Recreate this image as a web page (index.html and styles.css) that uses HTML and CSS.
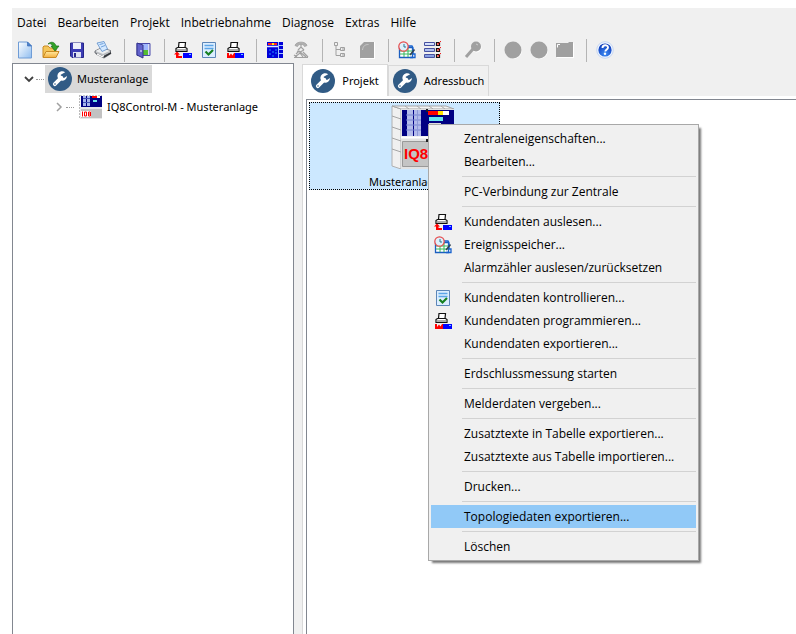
FILE: index.html
```
<!DOCTYPE html>
<html lang="de">
<head>
<meta charset="utf-8">
<title>Musteranlage</title>
<link rel="stylesheet" href="styles.css">
</head>
<body>
<svg class="defs" aria-hidden="true">
  <defs>
    <linearGradient id="paper" x1="0" y1="0" x2="1" y2="1"><stop offset="0" stop-color="#fff"/><stop offset="1" stop-color="#8fbdf0"/></linearGradient>
    <linearGradient id="gold" x1="0" y1="0" x2="0" y2="1"><stop offset="0" stop-color="#ffe9a0"/><stop offset="1" stop-color="#f5b040"/></linearGradient>
    <linearGradient id="bar" x1="0" y1="0" x2="0" y2="1"><stop offset="0" stop-color="#dfe8ff"/><stop offset="1" stop-color="#7d97e0"/></linearGradient>
    <radialGradient id="ball" cx=".5" cy=".8" r=".8"><stop offset="0" stop-color="#3f8df5"/><stop offset="1" stop-color="#0b35b5"/></radialGradient>
    <symbol id="i-new" viewBox="0 0 18 18"><path d="M2.500 1h9l4 4v12h-13z" fill="url(#paper)" stroke="#6f9cd6"/><path d="M11.500 1v4h4z" fill="#4d82cc" stroke="#3b6fb8" stroke-width=".7"/></symbol>
    <symbol id="i-open" viewBox="0 0 18 18"><path d="M1 16V6l1-1h4l2 2h6v3" fill="#f4c65a" stroke="#c98a24"/><path d="M1 16.500l3-6h13l-3 6z" fill="url(#gold)" stroke="#c98a24"/><path d="M6 3c3-3 7-2 8 2h3l-4 5-4-5h2c-1-2-3-3-5-2z" fill="#32a428" stroke="#176b16" stroke-width=".7"/></symbol>
    <symbol id="i-save" viewBox="0 0 18 18"><path d="M2.500 2h13v14.500H4L2.500 15z" fill="#3c3cb4" stroke="#26268a"/><path d="M5 2h8v6H5z" fill="#eef0fb"/><path d="M5 11h8v5.500H5z" fill="#dfe2f2"/><path d="M6 12h2v4H6z" fill="#26268a"/></symbol>
    <symbol id="i-print" viewBox="0 0 18 18"><path d="M2 12l5-4 10 3v2l-7 4.500-8-4z" fill="#777b80"/><path d="M1 10l6-3 9.500 2.500v2.500L9 15.500 1 12z" fill="#b9bcc0" stroke="#55595f" stroke-width=".8"/><path d="M1.500 10L7 7.300l9 2.400-7 3.300z" fill="#eceef0"/><path d="M3 2l7-1.500 3.500 7.500L8 10.500z" fill="#d3e8ff" stroke="#5d8ec9" stroke-width=".8"/><path d="M5.500 3.500l4-1M7 6l4-1.500" stroke="#6fa1dc"/><path d="M3 13l5 2.500 2-.8" fill="none" stroke="#fff" stroke-width="1.300"/><path d="M10 15.800l7-4" stroke="#303338" stroke-width="1.500"/></symbol>
    <symbol id="i-exit" viewBox="0 0 18 18"><path d="M3 2.500h13v12H3z" fill="#d7dcf4" stroke="#4949aa"/><path d="M9 3h5v7H9z" fill="#9fb6ff"/><path d="M9 9h5v5H9z" fill="#55bd32"/><path d="M3 2l6 2v13l-6-3z" fill="#6262cc" stroke="#34348b"/><path d="M7 9v2" stroke="#fff"/></symbol>
    <symbol id="i-read" viewBox="0 0 18 18"><path d="M5 1.500h6.500l-.5 5H4.500z" fill="#fff" stroke="#111" stroke-width="1.200"/><path d="M2 7.500l1.500-1h8l1.500 1v3H2z" fill="#fff" stroke="#111" stroke-width="1.200"/><path d="M3 9h9" stroke="#111" stroke-width=".7"/><path d="M0 13.500L3 10.500l3 3H4.500V15H8v2H2v-3.500z" fill="#f00"/><path d="M9 12h9v5H9z" fill="#00f"/><path d="M15 13.500h2" stroke="#6cf"/></symbol>
    <symbol id="i-prog" viewBox="0 0 18 18"><path d="M5 1.500h6.500l-.5 5H4.500z" fill="#fff" stroke="#111" stroke-width="1.200"/><path d="M2 7.500l1.500-1h8l1.500 1v3H2z" fill="#fff" stroke="#111" stroke-width="1.200"/><path d="M3 9h9" stroke="#111" stroke-width=".7"/><path d="M1 12h2v3l2-2.500 1.500 2L8 12h1v5H1z" fill="#f00"/><path d="M9 12h9v5H9z" fill="#00f"/><path d="M15 13.500h2" stroke="#6cf"/></symbol>
    <symbol id="i-check" viewBox="0 0 18 18"><path d="M2.500 1.500h13v15h-13z" fill="#dceeff" stroke="#5c86b8"/><path d="M4.500 4.500h9M4.500 7.500h9" stroke="#5ba5e8" stroke-width="1.300"/><path d="M5.500 10.500l3 3 4.500-4.500" fill="none" stroke="#168020" stroke-width="2.200"/></symbol>
    <symbol id="i-panel" viewBox="0 0 18 18"><path d="M1 1h16v16H1z" fill="#0000d8"/><path d="M2 2h4v2H2zM8 2h3v2H8z" fill="#f22"/><path d="M6 2h2v2H6z" fill="#fe0"/><path d="M1 5.500h12" stroke="#dfe8ff" stroke-width="1.500"/><path d="M12.500 1v16M13 4.500h4M13 8.500h4M13 12.500h4" stroke="#a5c4ff"/><path d="M3 9h2m1 2h2m1-2h2M3 13h2m1 2h2m1-3h2" stroke="#2090ff"/></symbol>
    <symbol id="i-phone" viewBox="0 0 18 18" fill="none" stroke="#a0a0a0"><path d="M3 4.500c1-4.500 11-4.500 12 0l-2.500 1c-1-3-6-3-7 0z" fill="#b0b0b0" stroke-width=".8"/><path d="M9 3v4M6 9l3-3 3 3M5 10l3 1 4-2M4 13l3-3 7 6M3 16l5-4 3 4M2 14l3 2m6-5l5 5M2 16.500h14" stroke-width="1.200"/></symbol>
    <symbol id="i-tree" viewBox="0 0 18 18" fill="none" stroke="#a0a0a0"><path d="M2.500 1.500h3v3h-3zM4 5v9.500h4M4 8.500h4M8.500 6.500h4v3h-4zM8.500 12.500h4v3h-4zM10 8h3M10 14h3"/></symbol>
    <symbol id="i-doc" viewBox="0 0 18 18"><path d="M3 5l4-4h10v17H3z" fill="#fff"/><path d="M2 5l4-4h10v16H2z" fill="#a0a0a0"/><path d="M4.500 9c.5-4 2.500-5.500 6-5.500" fill="none" stroke="#c8c8c8"/></symbol>
    <symbol id="i-event" viewBox="0 0 18 18"><path d="M1.500 6.500h13v10h-13z" fill="#fff" stroke="#1b5fc0" stroke-width="1.300"/><path d="M2 10h12M2 13h12M6 7v9M10 7v9" stroke="#35b85e"/><path d="M9 5h5l1 2v6h2v3.500h-5" fill="none" stroke="#1762ce" stroke-width="1.300"/><circle cx="5.500" cy="5.500" r="4.700" fill="#def0fb" stroke="#e84a4a" stroke-width="1.200"/><path d="M6 3v3h2" fill="none" stroke="#2b7593"/><path d="M12 14l4.500-5.500" stroke="#345" stroke-width="1.600"/></symbol>
    <symbol id="i-list" viewBox="0 0 18 18"><path d="M.5 1.500h10v3H.5zM.5 7.500h10v3H.5zM.5 13.500h10v3H.5z" fill="url(#bar)" stroke="#4751a0"/><path d="M12.500 1.500h3v3h-3zM12.500 7.500h3v3h-3zM12.500 13.500h3v3h-3z" fill="#f77" stroke="#111" stroke-width="1.200"/><path d="M14 3l3-3m-3 9l3-3m-3 9l3-3" stroke="#e22"/></symbol>
    <symbol id="i-key" viewBox="0 0 18 18"><circle cx="12.500" cy="6.500" r="5" fill="#fff"/><circle cx="12" cy="5.500" r="5" fill="#a0a0a0"/><path d="M9 8L2 16" stroke="#a0a0a0" stroke-width="3"/><path d="M12 3l2 1" stroke="#ccc"/></symbol>
    <symbol id="i-dot" viewBox="0 0 18 18"><circle cx="9.500" cy="9.500" r="8.500" fill="#fff"/><circle cx="9" cy="9" r="8.500" fill="#a0a0a0"/></symbol>
    <symbol id="i-folder" viewBox="0 0 18 18"><path d="M1 3h11l1-2h4l1 2v14H1z" fill="#fff"/><path d="M0 2h12l1-1h4v15H0z" fill="#a0a0a0"/><path d="M1.500 6.500v-3H4" fill="none" stroke="#fff"/></symbol>
    <symbol id="i-help" viewBox="0 0 18 18"><circle cx="9" cy="9" r="8.300" fill="#edf4ff" stroke="#bccff0" stroke-width=".8"/><circle cx="9" cy="9" r="6.600" fill="url(#ball)"/><path d="M6.500 7c0-3.500 5.500-3.500 5.500-.5 0 2-2.500 1.800-2.700 4" fill="none" stroke="#fff" stroke-width="1.900"/><circle cx="9" cy="12.800" r="1.200" fill="#fff"/></symbol>
    <symbol id="i-wrench" viewBox="0 0 24 24"><circle cx="12" cy="12" r="12" fill="#315b85"/><path d="M6.800 17.200l6.500-6.500" stroke="#fff" stroke-width="3.800" stroke-linecap="round"/><path d="M17.200 5.200A4.800 4.800 0 1 0 19 9l-3 2-2.700-.7-.6-2.600z" fill="#fff"/><circle cx="7" cy="17" r=".8" fill="#315b85"/></symbol>
    <symbol id="i-rack" viewBox="0 0 64 64">
      <path d="M1 1l9 3v60l-9-3z" fill="#f0f0f0" stroke="#b0b0b0"/><path d="M1 1h54l8 3H10z" fill="#f4f4f4" stroke="#a5a5a5"/><path d="M14 1l4 3m8-3l4 3m8-3l4 3m8-3l4 3" stroke="#aaa"/>
      <path d="M1 11l9 3M1 22l9 3M1 33l9 3M1 44l9 3" stroke="#a5a5a5"/><path d="M10 4h53v60H10z" fill="#e2e2e2"/>
      <path d="M11 5h52v26H11z" fill="#000082"/><path d="M16 5h6v26h-6zM23 5h7v26h-7z" fill="#b3bbea"/><path d="M15 10h15M15 15h15M15 20h15M15 25h15" stroke="#7683d0"/><path d="M26.500 5v26" stroke="#8d98da"/>
      <path d="M37 6h10v4H37z" fill="#f00"/><path d="M47 6h5v4h-5z" fill="#ffe300"/><path d="M52 6h6v4h-6z" fill="#fff"/><path d="M38 12h14v4H38z" fill="#68e6ef"/><path d="M38 18h12v2H38z" fill="#ddd"/>
      <path d="M10 32.500h53" stroke="#fff" stroke-width="2"/><path d="M11.500 36.500h51v25h-51z" fill="#c4c4c4" stroke="#999"/><path d="M36 4v3M36 34v3" stroke="#222" stroke-width="2"/>
      <text x="13" y="54" class="rack-text">IQ8</text>
    </symbol>
    <symbol id="i-rack-small" viewBox="0 0 24 24"><path d="M1.500 0v24" stroke="#bbb" stroke-dasharray="2 1"/><path d="M2 .5h22" stroke="#ccc" stroke-dasharray="2 1"/><path d="M3 1h21v11H3z" fill="#000082"/><path d="M5 1h3v10H5zM9 1h3v10H9z" fill="#a8b5ec"/><path d="M5 3.500h7M5 7.500h7" stroke="#4152b5"/><path d="M14 1h5v2h-5z" fill="#f00"/><path d="M19 1h3v2h-3z" fill="#ffe"/><path d="M15 5h4v2h-4z" fill="#6de4e4"/><path d="M2 12h22v12H2z" fill="#e8e8e8"/><path d="M3 14h21v9H3z" fill="#c2c2c2"/><path d="M3 16h10v6H3z" fill="#fff"/><path d="M4.500 16.500v5M6.500 17h2v4h-2zM10.500 17h2v4h-2zM10.500 19h2" fill="none" stroke="#f00"/></symbol>
  </defs>
</svg>

<div class="app">
  <nav class="menubar" aria-label="Hauptmenü">
    <button>Datei</button><button>Bearbeiten</button><button>Projekt</button><button>Inbetriebnahme</button><button>Diagnose</button><button>Extras</button><button>Hilfe</button>
  </nav>

  <div class="toolbar" role="toolbar" aria-label="Werkzeuge">
    <button aria-label="Neu"><svg><use href="#i-new"/></svg></button>
    <button aria-label="Öffnen"><svg><use href="#i-open"/></svg></button>
    <button aria-label="Speichern"><svg><use href="#i-save"/></svg></button>
    <button aria-label="Drucken"><svg><use href="#i-print"/></svg></button>
    <span class="divider"></span>
    <button aria-label="Beenden"><svg><use href="#i-exit"/></svg></button>
    <span class="divider"></span>
    <button aria-label="Auslesen"><svg><use href="#i-read"/></svg></button>
    <button aria-label="Kontrollieren"><svg><use href="#i-check"/></svg></button>
    <button aria-label="Programmieren"><svg><use href="#i-prog"/></svg></button>
    <span class="divider"></span>
    <button aria-label="Zentrale"><svg><use href="#i-panel"/></svg></button>
    <button aria-label="Verbindung" disabled><svg><use href="#i-phone"/></svg></button>
    <span class="divider"></span>
    <button aria-label="Struktur" disabled><svg><use href="#i-tree"/></svg></button>
    <button aria-label="Dokument" disabled><svg><use href="#i-doc"/></svg></button>
    <span class="divider"></span>
    <button aria-label="Ereignisspeicher"><svg><use href="#i-event"/></svg></button>
    <button aria-label="Liste"><svg><use href="#i-list"/></svg></button>
    <span class="divider"></span>
    <button aria-label="Suchen" disabled><svg><use href="#i-key"/></svg></button>
    <span class="divider"></span>
    <button aria-label="Zurück" disabled><svg><use href="#i-dot"/></svg></button>
    <button aria-label="Vor" disabled><svg><use href="#i-dot"/></svg></button>
    <button aria-label="Ordner" disabled><svg><use href="#i-folder"/></svg></button>
    <span class="divider"></span>
    <button aria-label="Hilfe"><svg><use href="#i-help"/></svg></button>
  </div>

  <div class="workspace">
    <aside class="tree">
      <div class="node">
        <svg class="chevron" viewBox="0 0 10 10"><path d="M1 3l4 4 4-4" fill="none" stroke="#404040" stroke-width="1.800"/></svg>
        <span class="dots"></span>
        <span class="node-label selected"><svg class="wrench"><use href="#i-wrench"/></svg>Musteranlage</span>
      </div>
      <div class="node child">
        <svg class="chevron" viewBox="0 0 10 10"><path d="M3 1l4 4-4 4" fill="none" stroke="#a0a0a0" stroke-width="1.500"/></svg>
        <span class="dots"></span>
        <span class="node-label"><svg class="rack-small"><use href="#i-rack-small"/></svg>IQ8Control-M - Musteranlage</span>
      </div>
    </aside>

    <main class="panel">
      <div class="tabs" role="tablist">
        <button class="tab active" role="tab" aria-selected="true"><svg class="wrench"><use href="#i-wrench"/></svg>Projekt</button>
        <button class="tab" role="tab" aria-selected="false"><svg class="wrench"><use href="#i-wrench"/></svg>Adressbuch</button>
      </div>
      <div class="sheet">
        <div class="canvas">
          <div class="item">
            <svg class="rack"><use href="#i-rack"/></svg>
            <span>Musteranlage</span>
          </div>
        </div>
      </div>
    </main>
  </div>
</div>

<div class="context" role="menu">
  <button role="menuitem">Zentraleneigenschaften...</button>
  <button role="menuitem">Bearbeiten...</button>
  <hr>
  <button role="menuitem">PC-Verbindung zur Zentrale</button>
  <hr>
  <button role="menuitem"><svg><use href="#i-read"/></svg>Kundendaten auslesen...</button>
  <button role="menuitem"><svg><use href="#i-event"/></svg>Ereignisspeicher...</button>
  <button role="menuitem">Alarmzähler auslesen/zurücksetzen</button>
  <hr>
  <button role="menuitem"><svg><use href="#i-check"/></svg>Kundendaten kontrollieren...</button>
  <button role="menuitem"><svg><use href="#i-prog"/></svg>Kundendaten programmieren...</button>
  <button role="menuitem">Kundendaten exportieren...</button>
  <hr>
  <button role="menuitem">Erdschlussmessung starten</button>
  <hr>
  <button role="menuitem">Melderdaten vergeben...</button>
  <hr>
  <button role="menuitem">Zusatztexte in Tabelle exportieren...</button>
  <button role="menuitem">Zusatztexte aus Tabelle importieren...</button>
  <hr>
  <button role="menuitem">Drucken...</button>
  <hr>
  <button role="menuitem" class="hot">Topologiedaten exportieren...</button>
  <hr>
  <button role="menuitem">Löschen</button>
</div>
</body>
</html>
```

FILE: styles.css
```
* { box-sizing: border-box; }

body {
  margin: 0;
  padding: 8px 0 0 12px;
  height: 100vh;
  overflow: hidden;
  background: #fff;
  color: #000;
  font: 12px/16px "Open Sans", "Noto Sans", sans-serif;
}

button {
  margin: 0;
  padding: 0;
  border: 0;
  background: none;
  color: inherit;
  font: inherit;
}

svg { display: block; flex: none; }
.defs { position: absolute; width: 0; height: 0; }

.app {
  display: flex;
  flex-direction: column;
  height: 100%;
  background: #f0f0f0;
}

.menubar {
  display: flex;
  gap: 11px;
  height: 29px;
  padding: 0 5px;
  align-items: center;
}

.toolbar {
  display: flex;
  height: 26px;
  align-items: center;
}
.toolbar button {
  display: flex;
  width: 26px;
  height: 24px;
  align-items: center;
  justify-content: center;
}
.toolbar svg { width: 18px; height: 18px; }
.divider {
  width: 1px;
  height: 23px;
  margin: 0 5px 0 8px;
  background: #b4b4b4;
}

.workspace {
  display: flex;
  flex: 1;
  min-height: 0;
}

.tree {
  flex: 0 0 36%;
  padding: 1px 0 0 11px;
  border: 1px solid #828790;
  border-bottom: 0;
  background: #fff;
  font-family: "Noto Sans", sans-serif;
  font-size: 11px;
}
.node {
  display: flex;
  height: 28px;
  align-items: center;
}
.node.child { padding-left: 30px; }
.chevron { width: 10px; height: 10px; }
.dots {
  width: 8px;
  margin: 0 1px 0 2px;
  border-top: 1px dotted #999;
}
.node-label {
  display: flex;
  height: 28px;
  padding: 0 3px;
  gap: 5px;
  align-items: center;
}
.selected { background: #d9d9d9; }
.wrench, .rack-small { width: 24px; height: 24px; }

.panel {
  display: flex;
  flex: 1;
  flex-direction: column;
  margin-left: 8px;
}
.tabs {
  display: flex;
  align-items: flex-end;
  padding-top: 1px;
  font-family: "Noto Sans", sans-serif;
  font-size: 11px;
}
.tab {
  display: flex;
  height: 31px;
  padding: 0 4px;
  gap: 7px;
  align-items: center;
  border: 1px solid #d9d9d9;
  border-bottom: 0;
}
.tab.active {
  height: 32px;
  padding: 0 8px;
  background: #fff;
}
.sheet {
  flex: 1;
  padding: 3px 0 0 3px;
  border-left: 1px solid #d9d9d9;
  background: #fff;
}
.canvas {
  height: 100%;
  padding: 2px;
  border: 1px solid #828790;
  border-width: 1px 0 0 1px;
}
.item {
  display: flex;
  width: 191px;
  height: 88px;
  padding-top: 2px;
  flex-direction: column;
  align-items: center;
  gap: 5px;
  border: 1px dotted #000;
  background: #cce8ff;
  font-family: "Noto Sans", sans-serif;
  font-size: 11px;
}
.rack { width: 64px; height: 64px; margin-left: 36px; }
.rack-text { fill: #f00; font: bold 15px "Liberation Sans", sans-serif; }

.context {
  position: absolute;
  top: 124px;
  left: 428px;
  width: 271px;
  padding: 2px;
  border: 1px solid #a8a8a8;
  background: #f0f0f0;
  box-shadow: 3px 3px 2px -1px #777;
}
.context button {
  display: flex;
  position: relative;
  width: 100%;
  height: 23px;
  padding-left: 33px;
  align-items: center;
}
.context svg {
  position: absolute;
  left: 3px;
  width: 18px;
  height: 18px;
}
.context hr {
  height: 1px;
  margin: 3px 0 3px 31px;
  border: 0;
  background: #d2d2d2;
}
.context .hot { background: #91c9f7; }
```
